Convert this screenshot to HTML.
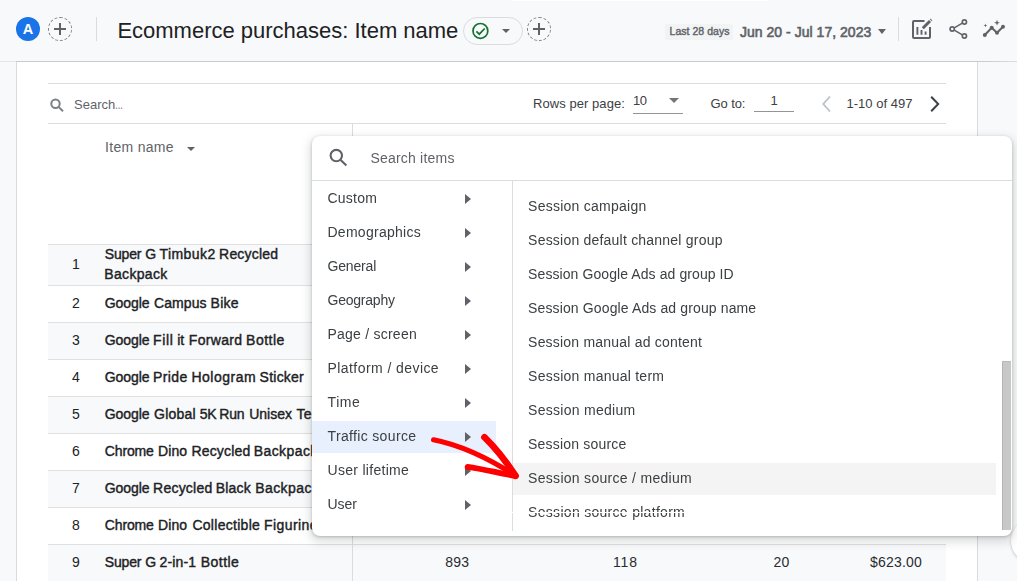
<!DOCTYPE html>
<html lang="en">
<head>
<meta charset="utf-8">
<title>Ecommerce purchases: Item name</title>
<style>
*{box-sizing:border-box;margin:0;padding:0}
html,body{width:1017px;height:581px;overflow:hidden;background:#f8f9fa;font-family:"Liberation Sans",sans-serif;color:#202124}
.abs,.abs>*{position:absolute}
.t{white-space:nowrap}
#hdr{left:0;top:0;width:1017px;height:62px;background:#f8f9fa;z-index:2}
#hline{left:0;top:61px;width:1017px;height:1px;z-index:6;background:linear-gradient(to right,#e4e6e8 0,#e4e6e8 16px,#c8cacc 16px,#c8cacc 980px,#dcdee0 1017px)}
#avatar{left:16px;top:17px;width:24px;height:24px;border-radius:50%;background:#1a73e8;color:#fff;font-weight:bold;font-size:14.5px;line-height:24px;text-align:center}
.plus{width:24px;height:24px;border-radius:50%;border:1px dashed #80868b}
.plus:before{content:"";position:absolute;left:5px;top:10px;width:12px;height:2px;background:#5f6368}
.plus:after{content:"";position:absolute;left:10px;top:5px;width:2px;height:12px;background:#5f6368}
.vdiv{width:1px;height:24px;background:#dadce0;top:17px}
#title{left:117.4px;top:16px;font-size:22px;line-height:30px;color:#202124}
#chip{left:463px;top:17px;width:60px;height:28px;border:1px solid #dadce0;border-radius:14px;background:#f8f9fa}
#badge{left:665px;top:24px;width:68px;height:16px;background:#f1f3f4;border-radius:2px}
#badget{left:669.5px;top:23px;font-size:10.5px;line-height:16px;color:#5f6368;-webkit-text-stroke:.4px #5f6368}
#date{left:740px;top:21px;font-size:14px;line-height:22px;color:#5f6368;-webkit-text-stroke:.6px #5f6368}
.caret{width:0;height:0;border-top:5px solid #5f6368;border-left:5px solid transparent;border-right:5px solid transparent}
#card{left:16px;top:61px;width:962px;height:520px;background:#fff;border:1px solid #d8dadd;border-top-color:#c8cacc;border-bottom:0;z-index:3}
#tb,.row{z-index:4}
.hl{height:1px;background:#dadce0;left:48px;width:898px}
.t13{font-size:13px;line-height:16px;color:#5f6368}
.row{left:48px;width:898px;height:37px;border-top:1px solid #e0e0e0}
.row.g{background:#f8f9fa}
.n{left:0;width:56px;text-align:center;top:8px;font-size:14px;line-height:18px;color:#202124}
.nm{left:56px;top:8px;font-size:14px;line-height:18px;color:#202124;-webkit-text-stroke:.4px #202124}
.v{top:8px;font-size:14px;line-height:18px;color:#2a2c30}
#pop{will-change:transform;z-index:5;left:312px;top:136px;width:700px;height:400px;background:#fff;border-radius:8px;box-shadow:0 1px 3px rgba(60,64,67,.3),0 4px 8px 3px rgba(60,64,67,.15);overflow:hidden;z-index:5}
.li,.ri{font-size:14px;line-height:18px;color:#3c4043}
.li{left:15.5px}
.ri{left:216.1px}
.tri{left:152.9px;width:0;height:0;border-left:6px solid #5f6368;border-top:5px solid transparent;border-bottom:5px solid transparent}
#arrow{left:0;top:0;z-index:9}
</style>
</head>
<body>
<div id="hdr" class="abs">
<div id="avatar">A</div>
<div class="plus" style="left:48px;top:17px"></div>
<div class="vdiv" style="left:96px"></div>
<div id="title" class="t" style="letter-spacing:-0.007px;">Ecommerce purchases: Item name</div>
<div id="chip" class="abs">
<svg style="left:6px;top:3px" width="20" height="20" viewBox="0 0 20 20"><circle cx="10.4" cy="9.9" r="7.4" fill="none" stroke="#137333" stroke-width="1.7"/><path d="M6.4 10.4l2.9 2.8 5.4-5.7" fill="none" stroke="#137333" stroke-width="1.7"/></svg>
<div class="caret" style="left:38px;top:11px;border-width:4.5px 4.5px 0 4.5px"></div>
</div>
<div class="plus" style="left:527px;top:17px"></div>
<div id="badge"></div>
<div id="badget" class="t" style="letter-spacing:0.039px;">Last 28 days</div>
<div id="date" class="t" style="letter-spacing:0.025px;">Jun 20 - Jul 17, 2023</div>
<div class="caret" style="left:878.3px;top:28.6px;border-width:5.4px 4.8px 0 4.8px"></div>
<div class="vdiv" style="left:898px"></div>
<div style="left:512px;top:0;width:256px;height:1px;background:#fff"></div>
<svg id="icons" style="left:905px;top:12px" width="112" height="36" viewBox="905 12 112 36" fill="none" stroke="#5f6368">
<path d="M924.5 21H914a1 1 0 0 0-1 1v15a1 1 0 0 0 1 1h15a1 1 0 0 0 1-1V27" stroke-width="2"/>
<path d="M917.4 34.8V27M921.5 34.8V30M925.6 34.8V31.4" stroke-width="1.9"/>
<path d="M922.8 28.2L930 21" stroke-width="3"/>
<path d="M930.8 20.2l.6-.6" stroke-width="2.8"/>
<path d="M954.3 27.8L962.3 23.2M954.3 30.2L962.3 34.8" stroke-width="1.5"/>
<circle cx="964.4" cy="22" r="2.1" stroke-width="1.7"/><circle cx="952.2" cy="29" r="2.1" stroke-width="1.7"/><circle cx="964.4" cy="36" r="2.1" stroke-width="1.7"/>
<path d="M984.8 35L991.7 27.8L997 32.8L1003 26.8" stroke-width="2" stroke-linejoin="round"/>
<g fill="#5f6368" stroke="none"><circle cx="984.8" cy="35" r="2"/><circle cx="991.7" cy="27.8" r="2"/><circle cx="997" cy="32.8" r="2"/><circle cx="1003" cy="26.8" r="2"/>
<path d="M997 19.8l.8 2.1 2.1.8-2.1.8-.8 2.1-.8-2.1-2.1-.8 2.1-.8z"/><path d="M985.4 23.5l.5 1.4 1.4.5-1.4.5-.5 1.4-.5-1.4-1.4-.5 1.4-.5z"/></g>
</svg>
</div>
<div id="card" class="abs"></div>
<div id="hline" class="abs"></div>
<div class="abs" id="tb" style="left:0;top:0">
<div class="hl" style="top:83px"></div>
<div class="hl" style="top:123px"></div>
<svg style="left:48px;top:96px" width="18" height="18" viewBox="48 96 18 18" fill="none" stroke="#7b8085" stroke-width="2"><circle cx="55.5" cy="103.8" r="4.2"/><path d="M58.6 106.9L63 111.2"/></svg>
<div id="search" class="t t13" style="left:74px;top:97px;">Search<span style="display:inline-block;transform:scaleX(.62);transform-origin:0 50%">…</span></div>
<div id="rpp" class="t t13" style="color:#3c4043;left:533px;top:96px;letter-spacing:0.061px;">Rows per page:</div>
<div id="ten" class="t t13" style="color:#3c4043;left:633px;top:93px;letter-spacing:-0.500px;">10</div>
<div class="caret" style="left:669.4px;top:98px;border-top-color:#757575"></div>
<div style="left:633px;top:113px;width:50px;height:1px;background:#949494"></div>
<div id="goto" class="t t13" style="color:#3c4043;left:710.6px;top:96px;letter-spacing:-0.120px;">Go to:</div>
<div id="one" class="t t13" style="color:#3c4043;left:770.5px;top:93px">1</div>
<div style="left:754px;top:111px;width:40px;height:1px;background:#949494"></div>
<svg style="left:818px;top:92px" width="20" height="24" viewBox="818 92 20 24" fill="none" stroke="#bdc1c6" stroke-width="1.8"><path d="M830 96.5L823.3 104L830 111.5"/></svg>
<div id="pg" class="t t13" style="color:#3c4043;left:846.4px;top:96px;letter-spacing:0.030px;">1-10 of 497</div>
<svg style="left:926px;top:92px" width="20" height="24" viewBox="926 92 20 24" fill="none" stroke="#3c4043" stroke-width="2"><path d="M931.2 96.7L938.2 104L931.2 111.3"/></svg>
<div id="itemname" class="t" style="left:105px;top:138px;font-size:14px;line-height:18px;color:#5f6368;letter-spacing:0.312px;">Item name</div>
<div class="caret" style="left:187px;top:146.5px;border-width:4px 4px 0 4px"></div>
</div>
<div class="row g abs" style="top:244px;height:41px"><span class="n" style="top:10px">1</span><span id="r1a" class="nm t abs" style="top:-1px;line-height:20px;width:300px;height:20px"><span style="left:0.85px;letter-spacing:-0.2px">Super </span><span style="left:41.35px;letter-spacing:0px">G </span><span style="left:55.5px;letter-spacing:0.433px">Timbuk2 </span><span style="left:115.1px;letter-spacing:0.186px">Recycled</span> </span><span id="r1b" class="nm t abs" style="top:19px;line-height:20px;width:300px;height:20px"><span style="left:0.3px;letter-spacing:0.329px">Backpack</span></span></div>
<div class="row abs" style="top:285px"><span class="n">2</span><span id="r2" class="nm t abs" style="width:300px;height:18px"><span style="left:0.8px;letter-spacing:-0.1px">Google </span><span style="left:50.1px;letter-spacing:0.06px">Campus </span><span style="left:106.6px;letter-spacing:0.267px">Bike</span></span></div>
<div class="row g abs" style="top:322px"><span class="n">3</span><span id="r3" class="nm t abs" style="width:300px;height:18px"><span style="left:0.8px;letter-spacing:-0.1px">Google </span><span style="left:49.1px;letter-spacing:0.6px">Fill </span><span style="left:73.3px;letter-spacing:-0.2px">it </span><span style="left:84.8px;letter-spacing:0.317px">Forward </span><span style="left:142.1px;letter-spacing:0.48px">Bottle</span></span></div>
<div class="row abs" style="top:359px"><span class="n">4</span><span id="r4" class="nm t abs" style="width:300px;height:18px"><span style="left:0.8px;letter-spacing:-0.1px">Google </span><span style="left:49.1px;letter-spacing:0.375px">Pride </span><span style="left:87.4px;letter-spacing:0.529px">Hologram </span><span style="left:155.6px;letter-spacing:0.233px">Sticker</span></span></div>
<div class="row g abs" style="top:396px"><span class="n">5</span><span id="r5" class="nm t abs" style="width:300px;height:18px"><span style="left:0.8px;letter-spacing:-0.1px">Google </span><span style="left:50.1px;letter-spacing:0.22px">Global </span><span style="left:95.65px;letter-spacing:-0.2px">5K </span><span style="left:115.3px;letter-spacing:-0.2px">Run </span><span style="left:145.3px;letter-spacing:-0.04px">Unisex </span><span style="left:192.4px;letter-spacing:0.42px">Tee</span></span></div>
<div class="row abs" style="top:433px"><span class="n">6</span><span id="r6" class="nm t abs" style="width:300px;height:18px"><span style="left:0.8px;letter-spacing:-0.14px">Chrome </span><span style="left:54.1px;letter-spacing:0.033px">Dino </span><span style="left:87.4px;letter-spacing:0.186px">Recycled </span><span style="left:149.7px;letter-spacing:0.42px">Backpack</span></span></div>
<div class="row g abs" style="top:470px"><span class="n">7</span><span id="r7" class="nm t abs" style="width:300px;height:18px"><span style="left:0.8px;letter-spacing:-0.1px">Google </span><span style="left:49.1px;letter-spacing:0.214px">Recycled </span><span style="left:111.8px;letter-spacing:0.15px">Black </span><span style="left:151.2px;letter-spacing:0.42px">Backpack</span></span></div>
<div class="row abs" style="top:507px"><span class="n">8</span><span id="r8" class="nm t abs" style="width:300px;height:18px"><span style="left:0.8px;letter-spacing:-0.14px">Chrome </span><span style="left:54.1px;letter-spacing:0.033px">Dino </span><span style="left:88.4px;letter-spacing:0.29px">Collectible </span><span style="left:160.0px;letter-spacing:0.42px">Figurines</span></span></div>
<div class="row g abs" style="top:544px"><span class="n">9</span><span id="r9" class="nm t abs" style="width:300px;height:18px"><span style="left:0.85px;letter-spacing:-0.2px">Super </span><span style="left:41.35px;letter-spacing:0px">G </span><span style="left:55.5px;letter-spacing:0.16px">2-in-1 </span><span style="left:96.7px;letter-spacing:0.48px">Bottle</span></span><span id="v1" class="v t" style="left:397.3px;letter-spacing:0.150px;">893</span><span id="v2" class="v t" style="left:565px;letter-spacing:0.850px;">118</span><span id="v3" class="v t" style="left:725.5px;letter-spacing:0.100px;">20</span><span id="v4" class="v t" style="left:822px;letter-spacing:0.183px;">$623.00</span></div>
<div class="abs" style="left:352px;top:124px;width:1px;height:457px;background:#dadce0;z-index:4"></div>
<div id="pop" class="abs">
<svg style="left:14px;top:10px" width="24" height="24" viewBox="326 146 24 24" fill="none" stroke="#5f6368" stroke-width="2.1"><circle cx="336.3" cy="155.6" r="5.7"/><path d="M340.4 159.7L346.4 165.6"/></svg>
<div id="si" class="t" style="left:58.4px;top:13px;font-size:14px;line-height:18px;color:#5f6368;letter-spacing:0.209px;">Search items</div>
<div style="left:0;top:44px;width:700px;height:1px;background:#dadce0"></div>
<div style="left:200px;top:45px;width:1px;height:350px;background:#dadce0"></div>
<div style="left:0;top:285px;width:184px;height:32px;background:#e8f0fe"></div>
<div style="left:201px;top:327px;width:483px;height:32px;background:#f4f4f4"></div>
<div id="l0" class="li t" style="top:53px;letter-spacing:0.220px;">Custom</div><div class="tri" style="top:58px"></div>
<div id="l1" class="li t" style="top:87px;letter-spacing:0.264px;">Demographics</div><div class="tri" style="top:92px"></div>
<div id="l2" class="li t" style="top:121px;letter-spacing:-0.167px;">General</div><div class="tri" style="top:126px"></div>
<div id="l3" class="li t" style="top:155px;letter-spacing:-0.225px;">Geography</div><div class="tri" style="top:160px"></div>
<div id="l4" class="li t" style="top:189px;letter-spacing:0.233px;">Page / screen</div><div class="tri" style="top:194px"></div>
<div id="l5" class="li t" style="top:223px;letter-spacing:0.431px;">Platform / device</div><div class="tri" style="top:228px"></div>
<div id="l6" class="li t" style="top:257px;letter-spacing:0.600px;">Time</div><div class="tri" style="top:262px"></div>
<div id="l7" class="li t" style="top:291px;letter-spacing:0.346px;">Traffic source</div><div class="tri" style="top:296px"></div>
<div id="l8" class="li t" style="top:325px;letter-spacing:0.292px;">User lifetime</div><div class="tri" style="top:330px"></div>
<div id="l9" class="li t" style="top:359px;letter-spacing:-0.067px;">User</div><div class="tri" style="top:364px"></div>
<div id="q0" class="ri t" style="top:61px;letter-spacing:0.249px;">Session campaign</div>
<div id="q1" class="ri t" style="top:95px;letter-spacing:0.214px;">Session default channel group</div>
<div id="q2" class="ri t" style="top:129px;letter-spacing:0.085px;">Session Google Ads ad group ID</div>
<div id="q3" class="ri t" style="top:163px;letter-spacing:0.126px;">Session Google Ads ad group name</div>
<div id="q4" class="ri t" style="top:197px;letter-spacing:0.203px;">Session manual ad content</div>
<div id="q5" class="ri t" style="top:231px;letter-spacing:0.243px;">Session manual term</div>
<div id="q6" class="ri t" style="top:265px;letter-spacing:0.275px;">Session medium</div>
<div id="q7" class="ri t" style="top:299px;letter-spacing:0.183px;">Session source</div>
<div id="q8" class="ri t" style="top:333px;letter-spacing:0.291px;">Session source / medium</div>
<div id="q9" class="ri t" style="top:367px;letter-spacing:0.295px;">Session source platform</div>
<div style="left:193px;top:376px;width:495px;height:1px;background:#fff"></div>
<div style="left:690px;top:225px;width:9px;height:169px;background:#c8c8c8;border-left:1px solid #b4b4b4;border-top:1px solid #bababa"></div>
</div>
<svg id="arrow" class="abs" width="1017" height="581" viewBox="0 0 1017 581" fill="none" stroke="#ff0000" stroke-width="5.5" stroke-linecap="round" stroke-linejoin="round">
<path d="M433.6 439.8C460 445 488 458 515.4 475.6" stroke-width="5.2"/>
<path d="M484.4 437.2Q499.6 451.8 515.6 475.8" stroke-width="6.6"/>
<path d="M467.6 466.8C484 469 502 474 515.6 476" stroke-width="5.8"/>
</svg>
<div class="abs" style="left:1011px;top:519px;width:44px;height:44px;border-radius:22px;background:#fff;box-shadow:0 1px 3px rgba(60,64,67,.3);z-index:4"></div>
</body>
</html>
